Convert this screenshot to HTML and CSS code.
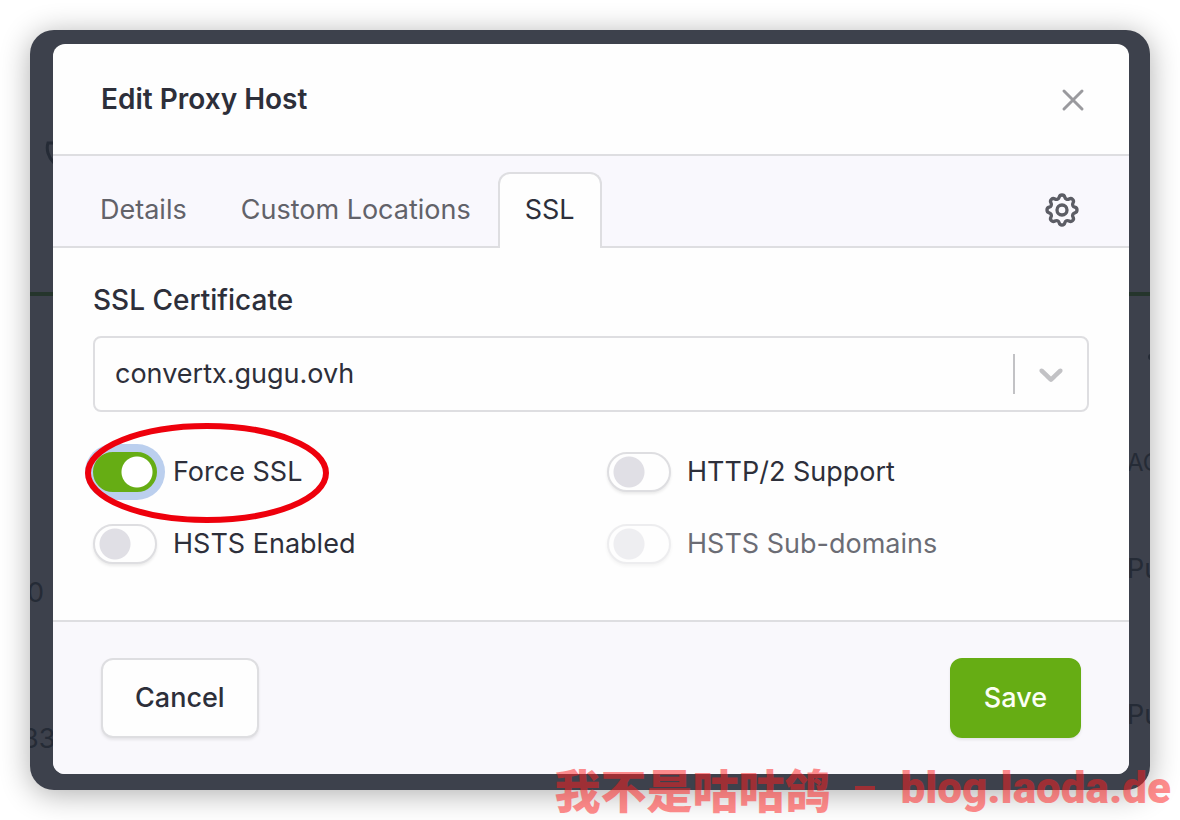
FILE: index.html
```
<!DOCTYPE html>
<html lang="en">
<head>
  <meta charset="UTF-8" />
  <meta name="viewport" content="width=device-width, initial-scale=1" />
  <title>Edit Proxy Host</title>
  <link rel="stylesheet" href="styles.css">
</head>
<body>
  <div class="backdrop">
    <!-- Page behind the modal -->
    <div class="behind" aria-hidden="true">
      <svg class="behind-icon" viewBox="0 0 24 24" width="24" height="24"><path d="M10 2H3C1 8 3 16 9 22" /></svg>
      <span class="behind-line"></span>
      <span class="behind-text left row-one">0</span>
      <span class="behind-text left row-two">33</span>
      <span class="behind-dot"></span>
      <span class="behind-text right head">AC</span>
      <span class="behind-text right public-one">Pu</span>
      <span class="behind-text right public-two">Pu</span>
    </div>

    <form class="modal" role="dialog" aria-labelledby="modalTitle">
      <header class="modal-header">
        <h1 id="modalTitle">Edit Proxy Host</h1>
        <button type="button" class="close" aria-label="Close">
          <svg viewBox="0 0 24 24" width="24" height="24"><path d="M3 3L21 21M21 3L3 21" /></svg>
        </button>
      </header>

      <nav class="tabs">
        <a href="#details" class="tab">Details</a>
        <a href="#locations" class="tab">Custom Locations</a>
        <a href="#ssl" class="tab active">SSL</a>
        <a href="#advanced" class="tab tab-settings" aria-label="Advanced">
          <svg viewBox="0 0 24 24" width="40" height="40">
            <path d="M10.325 4.317c.426 -1.756 2.924 -1.756 3.35 0a1.724 1.724 0 0 0 2.573 1.066c1.543 -.94 3.31 .826 2.37 2.37a1.724 1.724 0 0 0 1.065 2.572c1.756 .426 1.756 2.924 0 3.35a1.724 1.724 0 0 0 -1.066 2.573c.94 1.543 -.826 3.31 -2.37 2.37a1.724 1.724 0 0 0 -2.572 1.065c-.426 1.756 -2.924 1.756 -3.35 0a1.724 1.724 0 0 0 -2.573 -1.066c-1.543 .94 -3.31 -.826 -2.37 -2.37a1.724 1.724 0 0 0 -1.065 -2.572c-1.756 -.426 -1.756 -2.924 0 -3.35a1.724 1.724 0 0 0 1.066 -2.573c-.94 -1.543 .826 -3.31 2.37 -2.37c1 .608 2.296 .07 2.572 -1.065" />
            <path d="M9 12a3 3 0 1 0 6 0a3 3 0 0 0 -6 0" />
          </svg>
        </a>
      </nav>

      <div class="modal-body" id="ssl">
        <label class="field-label" for="certificate">SSL Certificate</label>
        <div class="select-wrap">
          <select id="certificate">
            <option>convertx.gugu.ovh</option>
          </select>
          <span class="select-arrow">
            <svg viewBox="0 0 20 20" width="40" height="40"><path d="M4.516 7.548c0.436-0.446 1.043-0.481 1.576 0l3.908 3.747 3.908-3.747c0.533-0.481 1.141-0.446 1.574 0 0.436 0.445 0.408 1.197 0 1.615-0.406 0.418-4.695 4.502-4.695 4.502-0.217 0.223-0.502 0.335-0.787 0.335s-0.57-0.112-0.789-0.335c0 0-4.287-4.084-4.695-4.502s-0.436-1.17 0-1.615z" /></svg>
          </span>
        </div>

        <div class="switches">
          <label class="switch marked">
            <input type="checkbox" class="focused" checked>
            <span>Force SSL</span>
            <svg class="mark" viewBox="0 0 244 102" width="244" height="102"><ellipse cx="122" cy="51" rx="119" ry="47" /></svg>
          </label>
          <label class="switch">
            <input type="checkbox">
            <span>HTTP/2 Support</span>
          </label>
          <label class="switch">
            <input type="checkbox">
            <span>HSTS Enabled</span>
          </label>
          <label class="switch">
            <input type="checkbox" disabled>
            <span>HSTS Sub-domains</span>
          </label>
        </div>
      </div>

      <footer class="modal-footer">
        <button type="button" class="btn">Cancel</button>
        <button type="submit" class="btn btn-save">Save</button>
      </footer>
    </form>
  </div>

  <div class="watermark">
    <span class="watermark-name" lang="zh">我不是咕咕鸽</span>
    <span class="watermark-dash"></span>
    <span class="watermark-site">blog.laoda.de</span>
  </div>
</body>
</html>
```

FILE: styles.css
```
* {
  box-sizing: border-box;
}

body {
  margin: 0;
  padding: 30px;
  position: relative;
  font-family: Inter, "Noto Sans CJK SC", sans-serif;
  font-size: 27px;
  line-height: 40px;
  color: #2d2f3a;
  background-color: white;
}

.backdrop {
  position: relative;
  padding: 14px 21px 16px 23px;
  border-radius: 24px;
  background-color: #3d414c;
  box-shadow: 0 4px 30px rgba(0, 0, 0, 0.32);
}

/* Page behind the modal */
.behind {
  position: absolute;
  inset: 0;
  overflow: hidden;
  border-radius: 24px;
  color: #252b36;
}

.behind-line {
  position: absolute;
  top: 262px;
  left: 0;
  right: 0;
  height: 4px;
  background-color: #25352c;
}

.behind-icon {
  position: absolute;
  top: 111px;
  left: 15px;
  fill: none;
  stroke: #252b36;
  stroke-width: 3;
}

.behind-dot {
  position: absolute;
  top: 324px;
  right: -4px;
  width: 6px;
  height: 6px;
  border-radius: 3px;
  background-color: #252b36;
}

.behind-text {
  position: absolute;
}

.left {
  left: -3px;
}

.right {
  left: calc(100% - 23px);
}

.row-one {
  top: 543px;
}

.row-two {
  top: 689px;
  left: -8px;
}

.head {
  top: 413px;
  font-size: 24px;
}

.public-one {
  top: 519px;
}

.public-two {
  top: 665px;
}

/* Modal */
.modal {
  position: relative;
  border-radius: 12px;
  overflow: hidden;
  background-color: #fefefe;
}

.modal-header {
  display: flex;
  align-items: center;
  justify-content: space-between;
  height: 112px;
  padding: 0 42px 0 48px;
  border-bottom: 2px solid #dedee1;
}

h1 {
  margin: 0;
  font-size: 28px;
  font-weight: 600;
  line-height: 40px;
}

.close {
  display: flex;
  padding: 4px 2px 2px;
  border: none;
  background: none;
  cursor: pointer;
}

.close svg {
  fill: none;
  stroke: #9a9a9e;
  stroke-width: 3;
  stroke-linecap: round;
}

.tabs {
  display: flex;
  padding: 16px 20px 0;
  background-color: #f9f8fd;
  box-shadow: inset 0 -2px #dedee1;
}

.tab {
  padding: 16px 25px 18px;
  border: 2px solid transparent;
  border-bottom: none;
  border-radius: 12px 12px 0 0;
  color: #626269;
  text-decoration: none;
}

.tab.active {
  border-color: #dedee1;
  background-color: #fefefe;
  color: #2d2f3a;
}

.tab-settings {
  margin-left: auto;
}

.tab-settings svg {
  display: block;
  fill: none;
  stroke: #5c5d65;
  stroke-width: 2;
  stroke-linecap: round;
  stroke-linejoin: round;
}

.modal-body {
  padding: 32px 40px 56px;
}

.field-label {
  display: block;
  margin-bottom: 16px;
  font-size: 28px;
  font-weight: 500;
}

.select-wrap {
  position: relative;
}

select {
  display: block;
  width: 100%;
  height: 76px;
  padding: 0 96px 0 20px;
  border: 2px solid #dedee1;
  border-radius: 8px;
  appearance: none;
  background-color: #fefefe;
  color: inherit;
  font: inherit;
}

.select-arrow {
  position: absolute;
  top: 18px;
  right: 18px;
  height: 40px;
  padding-left: 16px;
  border-left: 2px solid #c2c2c5;
  pointer-events: none;
}

.select-arrow svg {
  display: block;
  fill: #c2c2c5;
}

.switches {
  display: grid;
  grid-template-columns: 1fr 1fr;
  gap: 32px;
  margin-top: 40px;
}

.switch {
  display: flex;
  align-items: center;
  gap: 16px;
}

.switch input {
  flex: none;
  width: 64px;
  height: 40px;
  margin: 0;
  border: 2px solid #dedee1;
  border-radius: 20px;
  appearance: none;
  background: radial-gradient(circle at 20px 18px, #e0dfe5 15px, transparent 16px) #fefefe;
  box-shadow: 0 2px 3px rgba(0, 0, 0, 0.08);
}

.switch input:checked {
  border-color: #66ad14;
  background: radial-gradient(circle at 42px 18px, white 15px, transparent 16px) #66ad14;
}

.switch input.focused {
  box-shadow: 0 0 0 8px #bbcfee;
}

.switch input:disabled {
  opacity: 0.5;
}

.switch input:disabled + span {
  opacity: 0.7;
}

/* Red ring drawn around the switch */
.marked {
  position: relative;
}

.mark {
  position: absolute;
  top: -30px;
  left: -8px;
  fill: none;
  stroke: #ee000c;
  stroke-width: 6;
}

.modal-footer {
  display: flex;
  justify-content: space-between;
  padding: 36px 48px;
  border-top: 2px solid #dedee1;
  background-color: #f9f8fc;
}

.btn {
  height: 80px;
  padding: 0 32px;
  border: 2px solid #dedee1;
  border-radius: 12px;
  background-color: #fefefe;
  box-shadow: 0 2px 3px rgba(0, 0, 0, 0.08);
  color: inherit;
  font: inherit;
  font-weight: 500;
  cursor: pointer;
}

.btn-save {
  border-color: #66ad14;
  background-color: #66ad14;
  color: #fcfff5;
}

/* Watermark */
.watermark {
  position: absolute;
  right: 9px;
  bottom: 12px;
  display: flex;
  align-items: center;
  gap: 25px;
  color: #ff1f1f;
  opacity: 0.5;
  font-weight: 900;
  white-space: nowrap;
}

.watermark-name {
  font-family: "Noto Sans CJK SC", sans-serif;
  font-size: 46px;
}

.watermark-dash {
  width: 20px;
  height: 4px;
  background-color: #ff1f1f;
}

.watermark-site {
  font-family: Roboto, sans-serif;
  font-size: 44px;
}
```
